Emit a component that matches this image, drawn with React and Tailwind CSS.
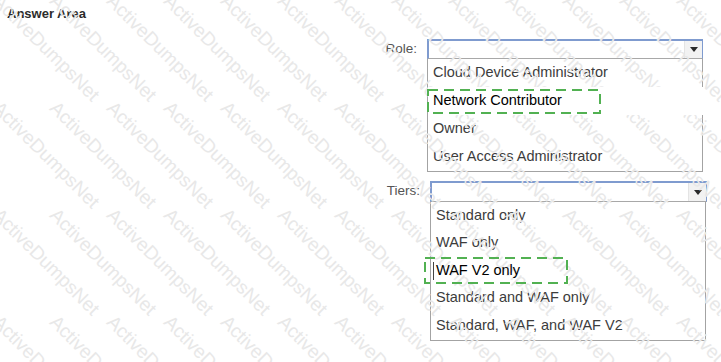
import React from "react";

const roleOptions = [
  "Cloud Device Administrator",
  "Network Contributor",
  "Owner",
  "User Access Administrator",
];
const tierOptions = [
  "Standard only",
  "WAF only",
  "WAF V2 only",
  "Standard and WAF only",
  "Standard, WAF, and WAF V2",
];

function Watermark() {
  const marks = [];
  for (let j = -1; j < 4; j++) {
    for (let k = 0; k < 13; k++) {
      marks.push(
        <span
          key={`${j}-${k}`}
          className="absolute origin-top-left rotate-45 whitespace-nowrap text-[19px] leading-none text-[#e8e8e8]"
          style={{ left: 3 + 57 * k, top: -9 + 107 * j }}
        >
          ActiveDumpsNet
        </span>
      );
    }
  }
  return <div className="pointer-events-none absolute inset-0 z-10 overflow-hidden">{marks}</div>;
}

function DashedBox({ w, h, className }) {
  return (
    <svg
      width={w}
      height={h}
      className={`pointer-events-none absolute ${className}`}
      viewBox={`0 0 ${w} ${h}`}
    >
      <rect
        x="1"
        y="1"
        width={w - 2}
        height={h - 2}
        fill="none"
        stroke="#52b152"
        strokeWidth="2"
        strokeDasharray="10 6"
      />
    </svg>
  );
}

function Select({ h }) {
  return (
    <div
      className={`flex justify-end border-t-2 border-l-2 border-r border-b border-t-[#7f9bcf] border-l-[#7f9bcf] border-r-[#7f9bcf] border-b-[#a8a8a8] bg-white ${h}`}
    >
      <div className="flex w-[18px] items-center justify-center border-l border-[#e4e4e4] bg-[#f2f2f2]">
        <div className="h-0 w-0 border-x-[4.5px] border-t-[5px] border-x-transparent border-t-[#2a2a2a]" />
      </div>
    </div>
  );
}

export default function App() {
  return (
    <div className="relative h-[362px] w-[721px] overflow-hidden bg-white font-['Liberation_Sans',Arial,sans-serif]">
      <div className="pl-[7px] pt-[5px] text-[13px] font-bold leading-[18px] text-[#2b2b2b]">
        Answer Area
      </div>

      {/* Role */}
      <div className="ml-[370px] mt-[16px] flex gap-[10px]">
        <div className="flex h-[20px] w-[47px] items-center justify-end text-[13.5px] text-[#555]">
          Role:
        </div>
        <div className="w-[276px]">
          <Select h="h-[20px]" />
          <div className="border border-t-0 border-[#a3a3a3] bg-white">
            {roleOptions.map((o, i) =>
              i === 1 ? (
                <div
                  key={o}
                  className="relative z-20 flex h-[28px] items-center bg-white pl-[5px] text-[14.5px] text-black"
                >
                  <span className="absolute right-[-2px] top-0 h-full w-[20px] bg-white" />
                  <DashedBox w={174} h={25} className="left-[-1px] top-[2px]" />
                  {o}
                </div>
              ) : (
                <div
                  key={o}
                  className="flex h-[28px] items-center pl-[5px] text-[14.5px] text-[#3c3c3c]"
                >
                  {o}
                </div>
              )
            )}
          </div>
        </div>
      </div>

      {/* Tiers */}
      <div className="ml-[373px] mt-[9px] flex gap-[10px]">
        <div className="flex h-[21px] w-[47px] items-center justify-end text-[13.5px] text-[#555]">
          Tiers:
        </div>
        <div className="w-[277px]">
          <Select h="h-[21px]" />
          <div className="mr-[1px] border border-t-0 border-[#a3a3a3] bg-white">
            {tierOptions.map((o, i) =>
              i === 2 ? (
                <div
                  key={o}
                  className="relative z-20 flex h-[27.5px] items-center pl-[5px] text-[14.5px] text-black"
                >
                  <span className="absolute left-[2px] top-[5px] h-[18px] w-px bg-[#444]" />
                  <DashedBox w={144} h={27} className="left-[-7px] top-0" />
                  {o}
                </div>
              ) : (
                <div
                  key={o}
                  className="flex h-[27.5px] items-center pl-[5px] text-[14.5px] text-[#3c3c3c]"
                >
                  {o}
                </div>
              )
            )}
          </div>
        </div>
      </div>

      <Watermark />
    </div>
  );
}
